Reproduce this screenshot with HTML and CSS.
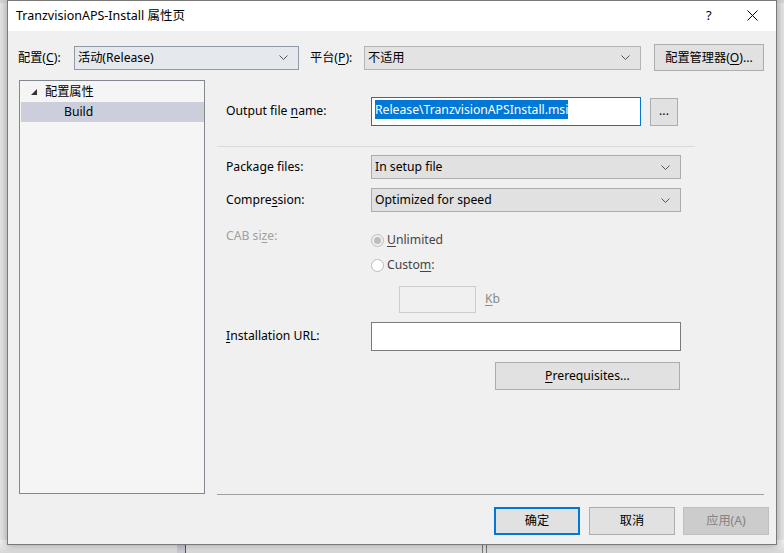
FILE: index.html
```html
<!DOCTYPE html>
<html lang="zh-CN">
<head>
    <meta charset="UTF-8">
    <title>TranzvisionAPS-Install 属性页</title>
    <link rel="stylesheet" href="styles.css">
</head>
<body>
    <div class="backwin">
        <div class="back-col back-col-a"></div>
        <div class="back-col back-col-b"></div>
    </div>

    <div class="dialog">
        <div class="titlebar">
            <span class="title">TranzvisionAPS-Install 属性页</span>
            <span class="tb-help">?</span>
            <span class="tb-close">
                <svg width="11" height="11" viewBox="0 0 11 11"><path d="M0.5 0.5 L10.5 10.5 M10.5 0.5 L0.5 10.5" stroke="#000" stroke-width="1" fill="none"/></svg>
            </span>
        </div>

        <div class="config-row">
            <span class="lbl-config">配置(<u>C</u>):</span>
            <div class="combo combo-config">
                <span>活动(Release)</span>
                <svg class="chev" width="9" height="5" viewBox="0 0 9 5"><path d="M0.5 0.5 L4.5 4.5 L8.5 0.5" stroke="#555" fill="none"/></svg>
            </div>
            <span class="lbl-platform">平台(<u>P</u>):</span>
            <div class="combo combo-platform">
                <span>不适用</span>
                <svg class="chev" width="9" height="5" viewBox="0 0 9 5"><path d="M0.5 0.5 L4.5 4.5 L8.5 0.5" stroke="#555" fill="none"/></svg>
            </div>
            <button class="btn btn-manager">配置管理器(<u>O</u>)...</button>
        </div>

        <div class="main">
            <div class="tree">
                <div class="tree-item tree-root">
                    <svg class="tree-arrow" width="6" height="6" viewBox="0 0 6 6"><polygon points="6,0 6,6 0,6" fill="#333"/></svg>
                    <span>配置属性</span>
                </div>
                <div class="tree-item tree-child selected">Build</div>
            </div>

            <div class="pane">
                <div class="field field-output">
                    <span class="field-label">Output file <u>n</u>ame:</span>
                    <div class="textbox textbox-focus"><span class="sel">Release\TranzvisionAPSInstall.msi</span></div>
                    <button class="btn btn-browse">...</button>
                </div>

                <div class="pane-sep"></div>

                <div class="field field-package">
                    <span class="field-label">Packa<u>g</u>e files:</span>
                    <div class="combo combo-wide">
                        <span>In setup file</span>
                        <svg class="chev" width="9" height="5" viewBox="0 0 9 5"><path d="M0.5 0.5 L4.5 4.5 L8.5 0.5" stroke="#555" fill="none"/></svg>
                    </div>
                </div>

                <div class="field field-compress">
                    <span class="field-label">Compre<u>s</u>sion:</span>
                    <div class="combo combo-wide">
                        <span>Optimized for speed</span>
                        <svg class="chev" width="9" height="5" viewBox="0 0 9 5"><path d="M0.5 0.5 L4.5 4.5 L8.5 0.5" stroke="#555" fill="none"/></svg>
                    </div>
                </div>

                <div class="cab">
                    <span class="field-label disabled">CAB si<u>z</u>e:</span>
                    <div class="cab-options">
                        <div class="radio-row">
                            <span class="radio checked"></span>
                            <span class="radio-text"><u>U</u>nlimited</span>
                        </div>
                        <div class="radio-row radio-custom">
                            <span class="radio"></span>
                            <span class="radio-text">Custo<u>m</u>:</span>
                        </div>
                        <div class="kb-row">
                            <div class="textbox textbox-disabled"></div>
                            <span class="kb"><u>K</u>b</span>
                        </div>
                    </div>
                </div>

                <div class="field field-url">
                    <span class="field-label"><u>I</u>nstallation URL:</span>
                    <div class="textbox textbox-url"></div>
                </div>

                <div class="prereq-row">
                    <button class="btn btn-prereq"><u>P</u>rerequisites...</button>
                </div>
            </div>
        </div>

        <div class="footer">
            <button class="btn btn-foot btn-default">确定</button>
            <button class="btn btn-foot">取消</button>
            <button class="btn btn-foot btn-disabled">应用(A)</button>
        </div>
    </div>
</body>
</html>
```

FILE: styles.css
```css
body {
    margin: 0;
    width: 784px;
    height: 553px;
    overflow: hidden;
    position: relative;
    background: linear-gradient(#d4d4d4 0, #d4d4d4 3px, #e4e4e4 3px);
    font-family: "Noto Sans", "Noto Sans CJK SC", sans-serif;
    font-size: 12.2px;
    color: #000;
}
u {
    text-decoration: underline;
    text-underline-offset: 2px;
}

/* window behind the dialog */
.backwin {
    position: absolute;
    left: 0;
    top: 540px;
    width: 784px;
    height: 13px;
    background: linear-gradient(#f2f2f2, #d8d8d8);
}
.back-col {
    position: absolute;
    top: 0;
    bottom: 0;
}
.back-col-a {
    left: 177px;
    width: 8px;
    background: #c9cad3;
    border-right: 1px solid #555;
}
.back-col-b {
    left: 482px;
    width: 3px;
    border-left: 1px solid #777;
    border-right: 1px solid #777;
}

.dialog {
    position: absolute;
    left: 7px;
    top: 0;
    width: 768px;
    border: 1px solid #7a7a7a;
    background: #f0f0f0;
    box-shadow: 0 0 8px rgba(0, 0, 0, 0.35);
    padding-bottom: 9px;
}

.titlebar {
    height: 30px;
    background: #fff;
    display: flex;
    align-items: center;
    padding-left: 8px;
}
.title {
    flex: 1;
    font-size: 12.5px;
    padding-bottom: 3px;
}
.tb-help {
    width: 12px;
    font-size: 13px;
    margin-right: 29px;
    padding-bottom: 3px;
}
.tb-close {
    display: flex;
    margin-right: 18px;
    padding-bottom: 1px;
}

.config-row {
    display: flex;
    align-items: center;
    height: 27px;
    margin-top: 13px;
    padding-left: 10px;
}
.lbl-config {
    width: 56px;
    padding-bottom: 2px;
}
.lbl-platform {
    width: 54px;
    margin-left: 11px;
    padding-bottom: 2px;
}

.combo {
    box-sizing: border-box;
    height: 24px;
    border: 1px solid #adadad;
    background: #e1e1e1;
    display: flex;
    align-items: center;
    justify-content: space-between;
    padding: 0 10px 2px 3px;
}
.combo-config {
    width: 225px;
    background: #e5e8ec;
    border-color: #8f9aa6;
}
.combo-platform {
    width: 277px;
    background: #e3e3e3;
    border-color: #b4b4b4;
}
.combo-wide {
    width: 310px;
}
.chev {
    flex: none;
    margin-top: 2px;
}

.btn {
    box-sizing: border-box;
    border: 1px solid #adadad;
    background: #e1e1e1;
    font-family: inherit;
    font-size: 12.2px;
    color: #000;
    padding: 0 0 2px;
    margin: 0;
}
.btn-manager {
    width: 110px;
    height: 27px;
    margin-left: 13px;
}

.main {
    display: flex;
    margin-top: 9px;
    padding-left: 11px;
}

.tree {
    box-sizing: border-box;
    width: 186px;
    height: 414px;
    border: 1px solid #828790;
    background: #f5f5f5;
    padding-top: 1px;
}
.tree-item {
    box-sizing: border-box;
    height: 20px;
    display: flex;
    align-items: center;
    padding-bottom: 2px;
}
.tree-root {
    padding-left: 11px;
}
.tree-arrow {
    margin-right: 8px;
    margin-top: 2px;
}
.tree-child {
    padding-left: 43px;
    margin-left: 1px;
}
.selected {
    background: #cccedb;
}

.pane {
    width: 547px;
    height: 414px;
    margin-left: 12px;
    border-bottom: 1px solid #a0a0a0;
}

.field {
    display: flex;
    align-items: center;
}
.field-label {
    box-sizing: border-box;
    width: 154px;
    padding-left: 9px;
    padding-bottom: 2px;
    flex: none;
}
.field-output {
    margin-top: 17px;
    height: 29px;
}
.textbox {
    box-sizing: border-box;
    background: #fff;
    border: 1px solid #7a7a7a;
}
.textbox-focus {
    width: 270px;
    height: 29px;
    border-color: #0078d7;
    padding: 2px 0 0 3px;
}
.sel {
    background: #0078d7;
    color: #fff;
    line-height: 19px;
    display: inline-block;
}
.btn-browse {
    width: 28px;
    height: 28px;
    margin-left: 9px;
    line-height: 18px;
}

.pane-sep {
    width: 478px;
    height: 1px;
    background: #dadada;
    margin-top: 20px;
}

.field-package {
    margin-top: 8px;
    height: 24px;
}
.field-compress {
    margin-top: 9px;
    height: 24px;
}

.cab {
    display: flex;
    margin-top: 16px;
}
.cab .field-label {
    line-height: 16px;
}
.disabled {
    color: #a0a0a0;
}
.cab-options {
    padding-top: 3px;
}
.radio-row {
    display: flex;
    align-items: center;
    height: 18px;
    color: #444;
}
.radio-row .radio-text {
    padding-bottom: 2px;
}
.radio-custom {
    margin-top: 7px;
}
.radio {
    box-sizing: border-box;
    width: 13px;
    height: 13px;
    border: 1px solid #bcbcbc;
    border-radius: 50%;
    background: #fff;
    margin-right: 3px;
    display: flex;
    align-items: center;
    justify-content: center;
}
.radio.checked {
    background: #f0f0f0;
}
.radio.checked::after {
    content: "";
    width: 7px;
    height: 7px;
    border-radius: 50%;
    background: #bcbcbc;
}

.kb-row {
    display: flex;
    align-items: center;
    margin-top: 12px;
    margin-left: 28px;
}
.textbox-disabled {
    width: 77px;
    height: 27px;
    border-color: #cccccc;
    background: #f0f0f0;
}
.kb {
    margin-left: 9px;
    color: #8a8a8a;
    padding-bottom: 2px;
}

.field-url {
    margin-top: 9px;
    height: 29px;
}
.textbox-url {
    width: 310px;
    height: 29px;
}

.prereq-row {
    margin-top: 11px;
    padding-left: 278px;
}
.btn-prereq {
    width: 185px;
    height: 28px;
}

.footer {
    display: flex;
    justify-content: flex-end;
    margin-top: 12px;
    padding-right: 7px;
    gap: 9px;
}
.btn-foot {
    width: 86px;
    height: 28px;
}
.btn-foot:last-child {
    margin-left: -1px;
}
.btn-default {
    border: 2px solid #0078d7;
}
.btn-disabled {
    background: #cccccc;
    border-color: #bfbfbf;
    color: #838383;
}
```
